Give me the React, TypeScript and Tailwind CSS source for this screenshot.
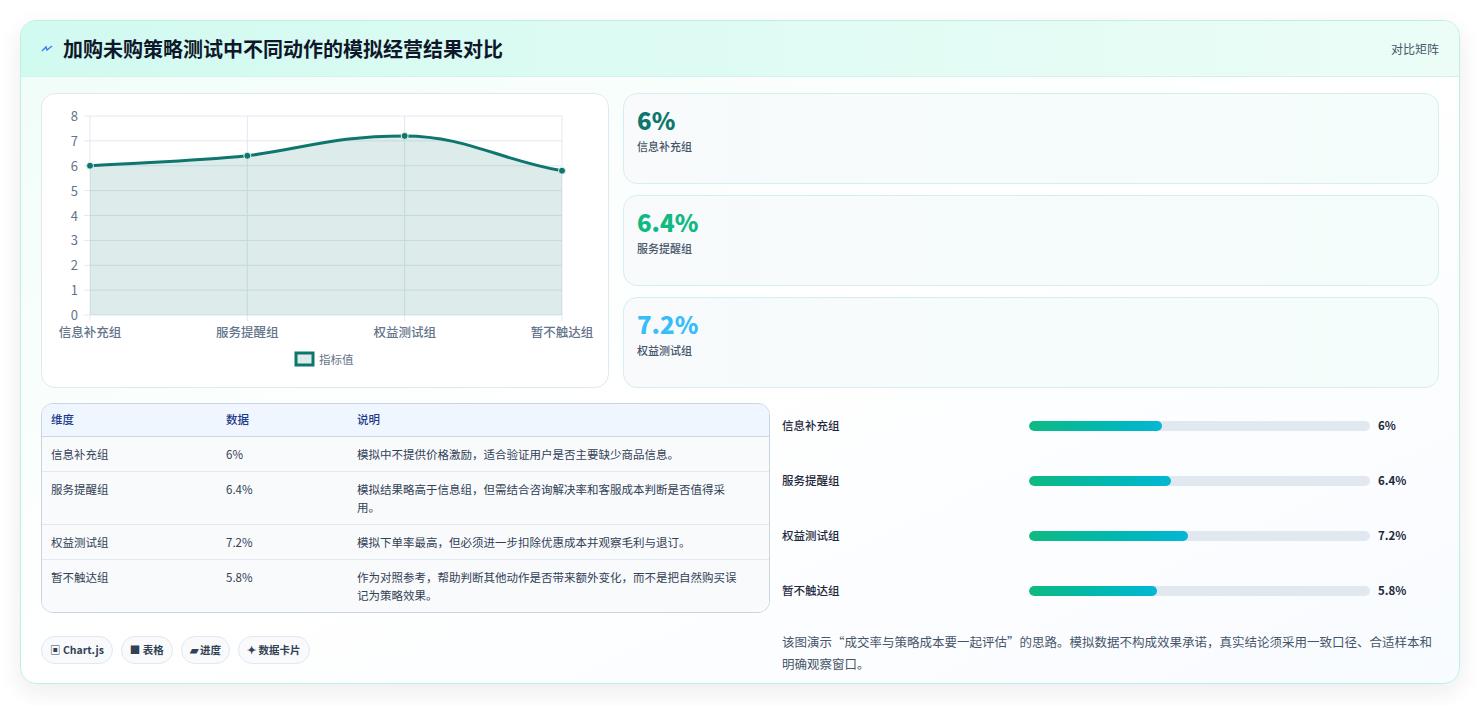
import React from "react";

const rows = [
  { n: "信息补充组", v: 6, d: "模拟中不提供价格激励，适合验证用户是否主要缺少商品信息。" },
  { n: "服务提醒组", v: 6.4, d: "模拟结果略高于信息组，但需结合咨询解决率和客服成本判断是否值得采用。" },
  { n: "权益测试组", v: 7.2, d: "模拟下单率最高，但必须进一步扣除优惠成本并观察毛利与退订。" },
  { n: "暂不触达组", v: 5.8, d: "作为对照参考，帮助判断其他动作是否带来额外变化，而不是把自然购买误记为策略效果。" },
];

function Chart() {
  const x0 = 48, x1 = 520, yTop = 22, yBot = 221;
  const xs = [0, 1, 2, 3].map((i) => x0 + ((x1 - x0) / 3) * i);
  const y = (v: number) => yBot - (v / 8) * (yBot - yTop);
  const pts = rows.map((r, i) => [xs[i], y(r.v)]);
  const line = `M${pts[0][0]},${pts[0][1]} C${pts[0][0] + 60},${pts[0][1] - 4} ${pts[1][0] - 60},${pts[1][1] + 6} ${pts[1][0]},${pts[1][1]} C${pts[1][0] + 60},${pts[1][1] - 8} ${pts[2][0] - 70},${pts[2][1]} ${pts[2][0]},${pts[2][1]} C${pts[2][0] + 60},${pts[2][1]} ${pts[3][0] - 60},${pts[3][1] - 10} ${pts[3][0]},${pts[3][1]}`;
  return (
    <svg width="568" height="295" style={{ fontFamily: "'Noto Sans CJK SC', sans-serif" }}>
      {[0, 1, 2, 3, 4, 5, 6, 7, 8].map((v) => (
        <g key={v}>
          <line x1={x0 - 6} x2={x1} y1={y(v)} y2={y(v)} stroke="#e2e8f0" />
          <text x={36} y={y(v) + 5} fontSize="13" fill="#64748b" textAnchor="end">{v}</text>
        </g>
      ))}
      {xs.map((x, i) => (
        <line key={i} x1={x} x2={x} y1={yTop} y2={yBot + 6} stroke="#e2e8f0" />
      ))}
      <path d={`${line} L${x1},${yBot} L${x0},${yBot} Z`} fill="rgba(15,118,110,0.14)" />
      <path d={line} fill="none" stroke="#0f766e" strokeWidth="3" />
      {pts.map((p, i) => (
        <circle key={i} cx={p[0]} cy={p[1]} r="3.5" fill="#0f766e" stroke="#e6f3f1" strokeWidth="1" />
      ))}
      {rows.map((r, i) => (
        <text key={i} x={xs[i]} y={243} fontSize="12.5" fontWeight="500" fill="#64748b" textAnchor="middle">{r.n}</text>
      ))}
      <rect x={254} y={259} width={17} height={12} fill="rgba(15,118,110,0.14)" stroke="#0f766e" strokeWidth="3" />
      <text x={277} y={270} fontSize="11.5" fill="#64748b">指标值</text>
    </svg>
  );
}

export default function App() {
  const colors = ["text-[#0f766e]", "text-[#10b981]", "text-[#38bdf8]"];
  return (
    <div className="w-[1480px] h-[706px] bg-white p-5 pt-5" style={{ fontFamily: "'Noto Sans CJK SC', 'Noto Sans', sans-serif" }}>
      <div className="h-[664px] rounded-[16px] border border-[#bfeee3] bg-gradient-to-br from-[#f0fdf9] via-white to-[#f8fbff] shadow-[0_8px_24px_rgba(15,23,42,0.08)] overflow-hidden">
        <div className="h-[56px] flex items-center justify-between px-5 bg-gradient-to-r from-[#d1faf0] to-[#ecfdf7] border-b border-[#d5f2ea]">
          <div className="flex items-center gap-[10px]">
            <svg width="12" height="10" viewBox="0 0 12 10"><path d="M1 7 L5 3 L6 6 L11 2" fill="none" stroke="#3b82f6" strokeWidth="1.5" /></svg>
            <h1 className="text-[20px] font-bold text-[#0f172a]">加购未购策略测试中不同动作的模拟经营结果对比</h1>
          </div>
          <span className="text-[12px] text-[#475569]">对比矩阵</span>
        </div>
        <div className="px-5 pt-4 flex gap-[14px]">
          <div className="w-[568px] h-[295px] rounded-[14px] border border-[#e2e8f0] bg-white">
            <Chart />
          </div>
          <div className="flex-1 flex flex-col gap-[11px]">
            {rows.slice(0, 3).map((r, i) => (
              <div key={i} className="h-[91px] rounded-[14px] border border-[#d5eef0] bg-gradient-to-r from-[#f8fafc] to-[#f4fdfb] px-[13px] pt-[10px]">
                <div className={`text-[24px] font-extrabold leading-[32px] ${colors[i]}`}>{r.v}%</div>
                <div className="text-[11px] font-medium text-[#475569] mt-[2px]">{r.n}</div>
              </div>
            ))}
          </div>
        </div>
        <div className="px-5 pt-[15px] flex gap-3">
          <div className="w-[729px]">
            <div className="rounded-[12px] border border-[#cbd5e1] overflow-hidden text-[11.5px] text-[#334155]">
              <div className="flex bg-[#eff6ff] h-[33px] items-center border-b border-[#cbd5e1] text-[#1e3a8a] font-medium">
                <div className="w-[184px] pl-[9px]">维度</div>
                <div className="w-[131px]">数据</div>
                <div className="flex-1">说明</div>
              </div>
              {rows.map((r, i) => (
                <div key={i} className={`flex py-[8px] leading-[18px] bg-[#f8fafc] ${i < 3 ? "border-b border-[#e2e8f0]" : ""}`}>
                  <div className="w-[184px] pl-[9px]">{r.n}</div>
                  <div className="w-[131px]">{r.v}%</div>
                  <div className="flex-1 pr-[22px]">{r.d}</div>
                </div>
              ))}
            </div>
            <div className="flex gap-2 mt-[23px] text-[10.5px] font-semibold text-[#334155]">
              {["▣ Chart.js", "■ 表格", "▰ 进度", "✦ 数据卡片"].map((t) => (
                <span key={t} className="h-[28px] px-[8px] flex items-center rounded-full border border-[#e2e8f0] bg-[#f8fafc]">{t}</span>
              ))}
            </div>
          </div>
          <div className="flex-1 pt-[14px]">
            {rows.map((r, i) => (
              <div key={i} className="flex items-center h-[18px] mb-[37px] text-[11.5px] text-[#1e293b]">
                <div className="w-[247px] font-medium">{r.n}</div>
                <div className="w-[341px] h-[10px] rounded-full bg-[#e2e8f0] overflow-hidden">
                  <div className="h-full rounded-full bg-gradient-to-r from-[#10b981] to-[#06b6d4]" style={{ width: `${(r.v / 15.4) * 100}%` }} />
                </div>
                <div className="ml-[8px] font-bold">{r.v}%</div>
              </div>
            ))}
            <p className="-mt-[6px] text-[12.5px] leading-[22px] text-[#475569]">该图演示“成交率与策略成本要一起评估”的思路。模拟数据不构成效果承诺，真实结论须采用一致口径、合适样本和明确观察窗口。</p>
          </div>
        </div>
      </div>
    </div>
  );
}
